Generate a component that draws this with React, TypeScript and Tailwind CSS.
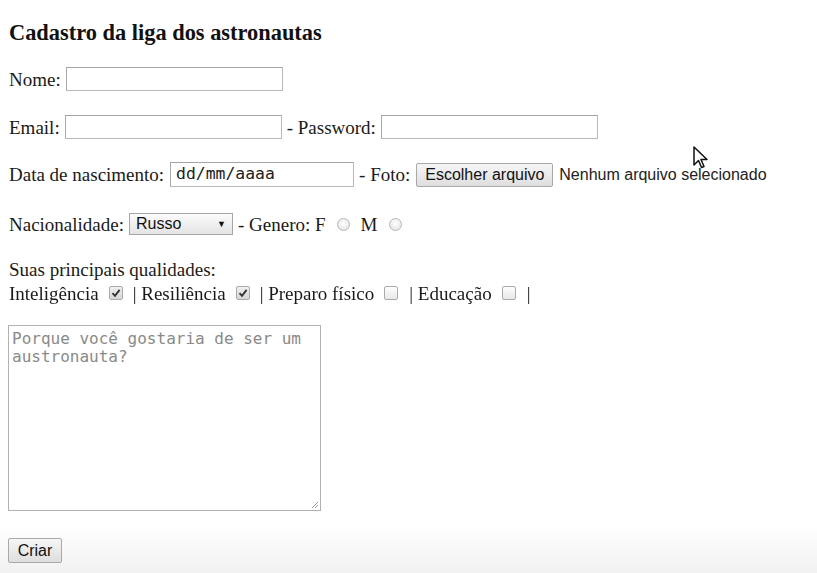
import React from "react";

const serif = "font-['Liberation_Serif',serif]";
const sans = "font-['Liberation_Sans',Arial,sans-serif]";
const mono = "font-['DejaVu_Sans_Mono',monospace]";

function TextInput({ w, h = 24, className = "", children }: { w: number; h?: number; className?: string; children?: React.ReactNode }) {
  return (
    <div
      className={`flex items-center border border-[#b9b9b9] border-t-[#a3a3a3] border-l-[#a8a8a8] bg-white pl-[5px] ${className}`}
      style={{ width: w, height: h }}
    >
      {children}
    </div>
  );
}

function Check({ checked }: { checked?: boolean }) {
  return (
    <span
      className={`mx-[10px] inline-flex h-[14px] w-[14px] items-center justify-center rounded-[2px] border border-[#ababab] ${
        checked ? "bg-[linear-gradient(#f0f0f0,#d6d6d6)]" : "bg-[linear-gradient(#fdfdfd,#e8e8e8)]"
      }`}
    >
      {checked && (
        <svg width="10" height="10" viewBox="0 0 10 10">
          <path d="M1.5 5.2 L4 7.8 L8.6 1.8" fill="none" stroke="#333" strokeWidth="1.9" />
        </svg>
      )}
    </span>
  );
}

function Radio() {
  return (
    <span className="mx-[11px] inline-block h-[13px] w-[13px] rounded-full border border-[#b8b8b8] bg-[radial-gradient(circle_at_50%_40%,#ffffff,#dedede)]" />
  );
}

export default function App() {
  return (
    <div className={`relative h-[573px] w-[817px] overflow-hidden bg-[linear-gradient(to_bottom,#ffffff_525px,#f1f1f1_573px)] ${serif} text-[19px] leading-none text-[#1a1a1a]`}>
      <div className="pl-[9px] pt-[20px]">
        <h3 className="flex h-[26px] items-center text-[22.4px] font-bold text-[#111]">Cadastro da liga dos astronautas</h3>

        <div className="mt-[21px] flex h-[24px] items-center gap-[5px]">
          <span>Nome:</span>
          <TextInput w={217} />
        </div>

        <div className="mt-[24px] flex h-[24px] items-center gap-[5px]">
          <span>Email:</span>
          <TextInput w={217} />
          <span>- Password:</span>
          <TextInput w={217} />
        </div>

        <div className="mt-[23px] flex h-[25px] items-center gap-[5px]">
          <span>Data de nascimento:</span>
          <TextInput w={184} h={25} className="ml-[1px]">
            <span className={`${mono} text-[16.4px] text-[#222]`}>dd/mm/aaaa</span>
          </TextInput>
          <span>- Foto:</span>
          <div className={`ml-[1px] flex h-[24px] w-[137px] items-center justify-center rounded-[2px] border border-[#a9a9a9] bg-[linear-gradient(#f6f6f6,#dedede)] ${sans} text-[16px] text-[#111]`}>
            Escolher arquivo
          </div>
          <span className={`${sans} ml-[1px] text-[16px] text-[#222]`}>Nenhum arquivo selecionado</span>
        </div>

        <div className="mt-[25px] flex h-[24px] items-center">
          <span>Nacionalidade:</span>
          <div className={`ml-[5px] flex h-[22px] w-[104px] items-center justify-between border border-[#a6a6a6] bg-[linear-gradient(#fbfbfb,#e4e4e4)] pl-[6px] pr-[6px] ${sans} text-[16px] text-[#111]`}>
            <span>Russo</span>
            <span className="text-[9px]">▼</span>
          </div>
          <span className="ml-[5px]">- Genero: F</span>
          <Radio />
          <span>M</span>
          <Radio />
        </div>

        <div className="mt-[21px] flex h-[24px] items-center">Suas principais qualidades:</div>
        <div className="flex h-[24px] items-center text-[#1a1a1a] will-change-transform">
          <span>Inteligência</span>
          <Check checked />
          <span>| Resiliência</span>
          <Check checked />
          <span>| Preparo físico</span>
          <Check />
          <span className="ml-[1px]">| Educação</span>
          <Check />
          <span className="ml-[1px]">|</span>
        </div>

        <div className="relative -ml-[1px] mt-[20px] h-[186px] w-[313px] border border-[#b2b2b2] bg-white px-[3px] pt-[4px]">
          <div className={`${mono} text-[16px] leading-[18px] text-[#8a8a8a]`}>
            Porque você gostaria de ser um
            <br />
            austronauta?
          </div>
          <svg className="absolute bottom-[1px] right-[1px]" width="9" height="9" viewBox="0 0 9 9">
            <path d="M8 2 L2 8 M8 5 L5 8" stroke="#999" strokeWidth="1" />
          </svg>
        </div>

        <div className={`-ml-[1px] mt-[27px] flex h-[25px] w-[54px] items-center justify-center rounded-[2px] border border-[#a9a9a9] bg-[linear-gradient(#f6f6f6,#dedede)] ${sans} text-[16px] text-[#111]`}>
          Criar
        </div>
      </div>

      <svg className="absolute left-[693px] top-[146px]" width="16" height="24" viewBox="0 0 16 24">
        <path d="M1 1 L1 19 L5.5 14.5 L8.5 21.5 L11 20.5 L8 13.5 L14 13.5 Z" fill="#fff" stroke="#111" strokeWidth="1.5" strokeLinejoin="round" />
      </svg>
    </div>
  );
}
